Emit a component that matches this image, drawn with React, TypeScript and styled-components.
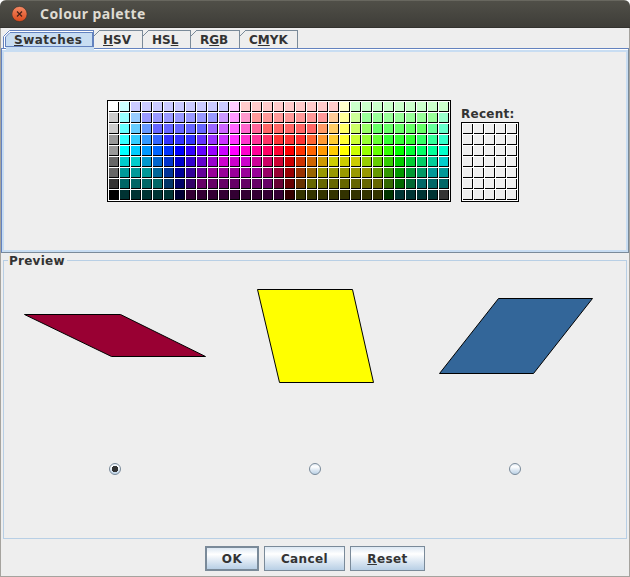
import React, { useState } from "react";
import styled, { createGlobalStyle, css } from "styled-components";

const LINE = "#7a8a99";
const BLUE = "#6382bf";
const PALE = "#c8ddf2";
const SOFT = "#b8cfe5";

const GlobalStyle = createGlobalStyle`
  * { box-sizing: border-box; }
  body { margin: 0; background: #fff; overflow: hidden; }
`;

const Window = styled.div`
  width: 630px;
  height: 577px;
  display: flex;
  flex-direction: column;
  border-radius: 6px 6px 0 0;
  overflow: hidden;
  background: #eee;
  color: #333;
  font: bold 12px/16px "DejaVu Sans", sans-serif;
`;

const TitleBar = styled.header`
  height: 28px;
  flex: none;
  display: flex;
  align-items: center;
  gap: 12px;
  padding-left: 12px;
  background: linear-gradient(#504f48, #3e3d38);
  border-top: 1px solid #68675f;
  border-bottom: 1px solid #33322e;
`;

const Title = styled.h1`
  margin: 0;
  color: #dfdbd2;
  font: bold 14px/20px "Noto Sans", "Open Sans", sans-serif;
  letter-spacing: 0.42px;
`;

const Frame = styled.div`
  flex: 1;
  display: flex;
  flex-direction: column;
  border: solid #a5a39e;
  border-width: 0 1px 1px;
`;

const TabStrip = styled.nav`
  position: relative;
  z-index: 1;
  display: flex;
  height: 20px;
  flex: none;
  padding: 2px 0 0 2px;
`;

const Tab = styled.button<{ $width: number }>`
  width: ${(p) => p.$width}px;
  height: 18px;
  display: flex;
  flex: none;
  padding: 0;
  border: 0;
  background: none;
  color: inherit;
  font: inherit;
`;

const TabCorner = styled.svg`
  display: block;
  flex: none;
  overflow: visible;
`;

const TabFace = styled.span<{ $selected?: boolean; $tracking?: number }>`
  flex: 1;
  height: 18px;
  padding: 1px 0 0 3px;
  text-align: left;
  letter-spacing: ${(p) => p.$tracking ?? 0}px;
  border: solid ${LINE};
  border-width: 1px 1px 0 0;
  ${(p) =>
    p.$selected &&
    css`
      height: 17px;
      border-color: ${BLUE};
      background: ${PALE};
      box-shadow: inset 0 1px #fff, inset 0 2px ${BLUE}, inset -1px -1px ${BLUE}, 0 3px ${PALE};
    `}
`;

const Key = styled.u`
  text-decoration-thickness: 1px;
  text-underline-offset: 1px;
  text-decoration-skip-ink: none;
`;

const ChooserPanel = styled.section`
  height: 205px;
  flex: none;
  display: flex;
  align-items: flex-end;
  gap: 10px;
  padding: 0 0 50px 105px;
  border: 1px solid;
  border-color: ${BLUE} ${LINE} ${LINE} ${BLUE};
  box-shadow: inset 0 1px #fff, inset 0 3px ${PALE}, inset 0 0 0 2px ${PALE};
`;

const SwatchGrid = styled.div<{ $columns: number }>`
  display: grid;
  grid-template-columns: repeat(${(p) => p.$columns}, 10px);
  grid-auto-rows: 10px;
  gap: 1px;
  padding: 1px;
  border: 1px solid #000;
  background: #fff;
`;

const Swatch = styled.i<{ $color: string }>`
  background: ${(p) => p.$color};
  border: solid #000;
  border-width: 0 1px 1px 0;
`;

const Recent = styled.div`
  display: flex;
  flex-direction: column;
  line-height: 15px;
  letter-spacing: 0.25px;
`;

const PreviewSet = styled.fieldset`
  flex: none;
  width: 624px;
  height: 286px;
  margin: 0 0 0 2px;
  padding: 0;
  border: 1px solid ${SOFT};
`;

const Legend = styled.legend`
  height: 15px;
  margin-left: 4px;
  padding: 0 2px 0 1px;
  letter-spacing: 0.25px;
`;

const Choices = styled.div`
  display: grid;
  grid-template-columns: repeat(3, 200px);
  margin: 1px 0 0 11px;
`;

const Choice = styled.div`
  display: flex;
  flex-direction: column;
  align-items: center;
`;

const Shape = styled.svg`
  display: block;
  width: 200px;
  height: 194px;
  fill: none;
  stroke: #000;
`;

const Radio = styled.button`
  width: 12px;
  height: 12px;
  padding: 0;
  border: 0;
  background: none;
`;

const RadioIcon = styled.svg`
  display: block;
`;

const Actions = styled.footer`
  display: flex;
  gap: 5px;
  margin: 7px 0 0 204px;
`;

const Button = styled.button<{ $width: number; $primary?: boolean }>`
  width: ${(p) => p.$width}px;
  height: 25px;
  padding: 0;
  border: ${(p) => (p.$primary ? 2 : 1)}px solid ${LINE};
  background: linear-gradient(#dde8f3, #fff 30%, #dde8f3 62%, #b8cfe5);
  color: #333;
  font: inherit;
  letter-spacing: 0.4px;
`;

// Each row is a list of [web colour, repeat count] runs.
const ROWS = [
  "fff cff ccf*9 fcf fcc*9 ffc cfc*9",
  "ccc 9ff 9cf 99f*7 c9f f9f f9c f99*7 fc9 ff9 cf9 9f9*7 9fc",
  "ccc 6ff 6cf 69f 66f*5 96f c6f f6f f6c f69 f66*5 f96 fc6 ff6 cf6 9f6 6f6*5 6f9 6fc",
  "999 3ff 3cf 39f 36f 33f*3 63f 93f c3f f3f f3c f39 f36 f33*3 f63 f93 fc3 ff3 cf3 9f3 6f3 3f3*3 3f6 3f9 3fc",
  "999 0ff 0cf 09f 06f 03f 00f 30f 60f 90f c0f f0f f0c f09 f06 f03 f00 f30 f60 f90 fc0 ff0 cf0 9f0 6f0 3f0 0f0 0f3 0f6 0f9 0fc",
  "666 0cc*2 09c 06c 03c 00c 30c 60c 90c c0c*3 c09 c06 c03 c00 c30 c60 c90 cc0*3 9c0 6c0 3c0 0c0 0c3 0c6 0c9 0cc",
  "666 099*3 069 039 009 309 609 909*5 906 903 900 930 960 990*5 690 390 090 093 096 099*2",
  "333 066*4 036 006 306 606*7 603 600 630 660*7 360 060 063 066*3",
  "000 033*5 003 303*9 300 330*8 030 033*4 333",
];

const PALETTE = ROWS.flatMap((row) =>
  row.split(" ").flatMap((run) => {
    const [color, count = "1"] = run.split("*");
    return Array<string>(Number(count)).fill("#" + color);
  })
);

const TABS = [
  { before: "", key: "S", after: "watches", width: 91, tracking: 0.5 },
  { before: "", key: "H", after: "SV", width: 49 },
  { before: "HS", key: "L", after: "", width: 48 },
  { before: "R", key: "G", after: "B", width: 49 },
  { before: "C", key: "M", after: "YK", width: 58 },
];

const SHAPES = [
  { fill: "#990033", points: "9.5,45.5 105.5,45.5 190.5,87.5 96.5,87.5" },
  { fill: "#ffff00", points: "42.5,20.5 137.5,20.5 158.5,113.5 64.5,113.5" },
  { fill: "#336699", points: "83.5,29.5 177.5,29.5 118.5,104.5 24.5,104.5" },
];

function Corner({ selected }: { selected: boolean }) {
  if (!selected) {
    return (
      <TabCorner width="6" height="18">
        <path d="M0 6L6 0" stroke={LINE} fill="none" />
      </TabCorner>
    );
  }
  return (
    <TabCorner width="8" height="18">
      <path d="M0 18V6L6 0H8V18Z" fill="#fff" />
      <path d="M3 20V7L7 3H8V20Z" fill={PALE} />
      <path d="M.5 18V6.5L6.5 .5H8M2.5 17V7L7 2.5H8M2.5 16.5H8" stroke={BLUE} fill="none" />
    </TabCorner>
  );
}

function RadioMark({ checked }: { checked: boolean }) {
  return (
    <RadioIcon width="12" height="12">
      <defs>
        <linearGradient id="radioFace" x1="0" y1="0" x2="0" y2="1">
          <stop offset="0" stopColor="#dde8f3" />
          <stop offset=".3" stopColor="#fff" />
          <stop offset=".6" stopColor="#dde8f3" />
          <stop offset="1" stopColor="#b8cfe5" />
        </linearGradient>
      </defs>
      <circle cx="6" cy="6" r="5.5" fill="url(#radioFace)" stroke={LINE} />
      {checked && <path d="M4 3h4v1h1v4h-1v1h-4v-1h-1v-4h1z" fill="#333" />}
    </RadioIcon>
  );
}

export default function App() {
  const [tab, setTab] = useState(0);
  const [choice, setChoice] = useState(0);
  return (
    <>
      <GlobalStyle />
      <Window>
        <TitleBar>
          <svg width="16" height="16">
            <defs>
              <linearGradient id="closeFace" x1="0" y1="0" x2="0" y2="1">
                <stop offset="0" stopColor="#f58a65" />
                <stop offset="1" stopColor="#dc4a1c" />
              </linearGradient>
            </defs>
            <circle cx="7.5" cy="8" r="7.6" fill="url(#closeFace)" stroke="#3a3028" strokeWidth=".6" />
            <path d="M5 5.5l5 5m0-5l-5 5" stroke="#462016" strokeWidth="1.2" />
          </svg>
          <Title>Colour palette</Title>
        </TitleBar>
        <Frame>
          <TabStrip>
            {TABS.map((t, i) => (
              <Tab key={t.key} $width={t.width} onClick={() => setTab(i)}>
                <Corner selected={i === tab} />
                <TabFace $selected={i === tab} $tracking={t.tracking}>
                  {t.before}
                  <Key>{t.key}</Key>
                  {t.after}
                </TabFace>
              </Tab>
            ))}
          </TabStrip>
          <ChooserPanel>
            <SwatchGrid $columns={31}>
              {PALETTE.map((color, i) => (
                <Swatch key={i} $color={color} />
              ))}
            </SwatchGrid>
            <Recent>
              Recent:
              <SwatchGrid $columns={5}>
                {Array.from({ length: 35 }, (_, i) => (
                  <Swatch key={i} $color="#eee" />
                ))}
              </SwatchGrid>
            </Recent>
          </ChooserPanel>
          <PreviewSet>
            <Legend>Preview</Legend>
            <Choices>
              {SHAPES.map((shape, i) => (
                <Choice key={shape.fill}>
                  <Shape>
                    <polygon points={shape.points} fill={shape.fill} />
                  </Shape>
                  <Radio onClick={() => setChoice(i)}>
                    <RadioMark checked={i === choice} />
                  </Radio>
                </Choice>
              ))}
            </Choices>
          </PreviewSet>
          <Actions>
            <Button $width={54} $primary>OK</Button>
            <Button $width={81}>Cancel</Button>
            <Button $width={75}><Key>R</Key>eset</Button>
          </Actions>
        </Frame>
      </Window>
    </>
  );
}
